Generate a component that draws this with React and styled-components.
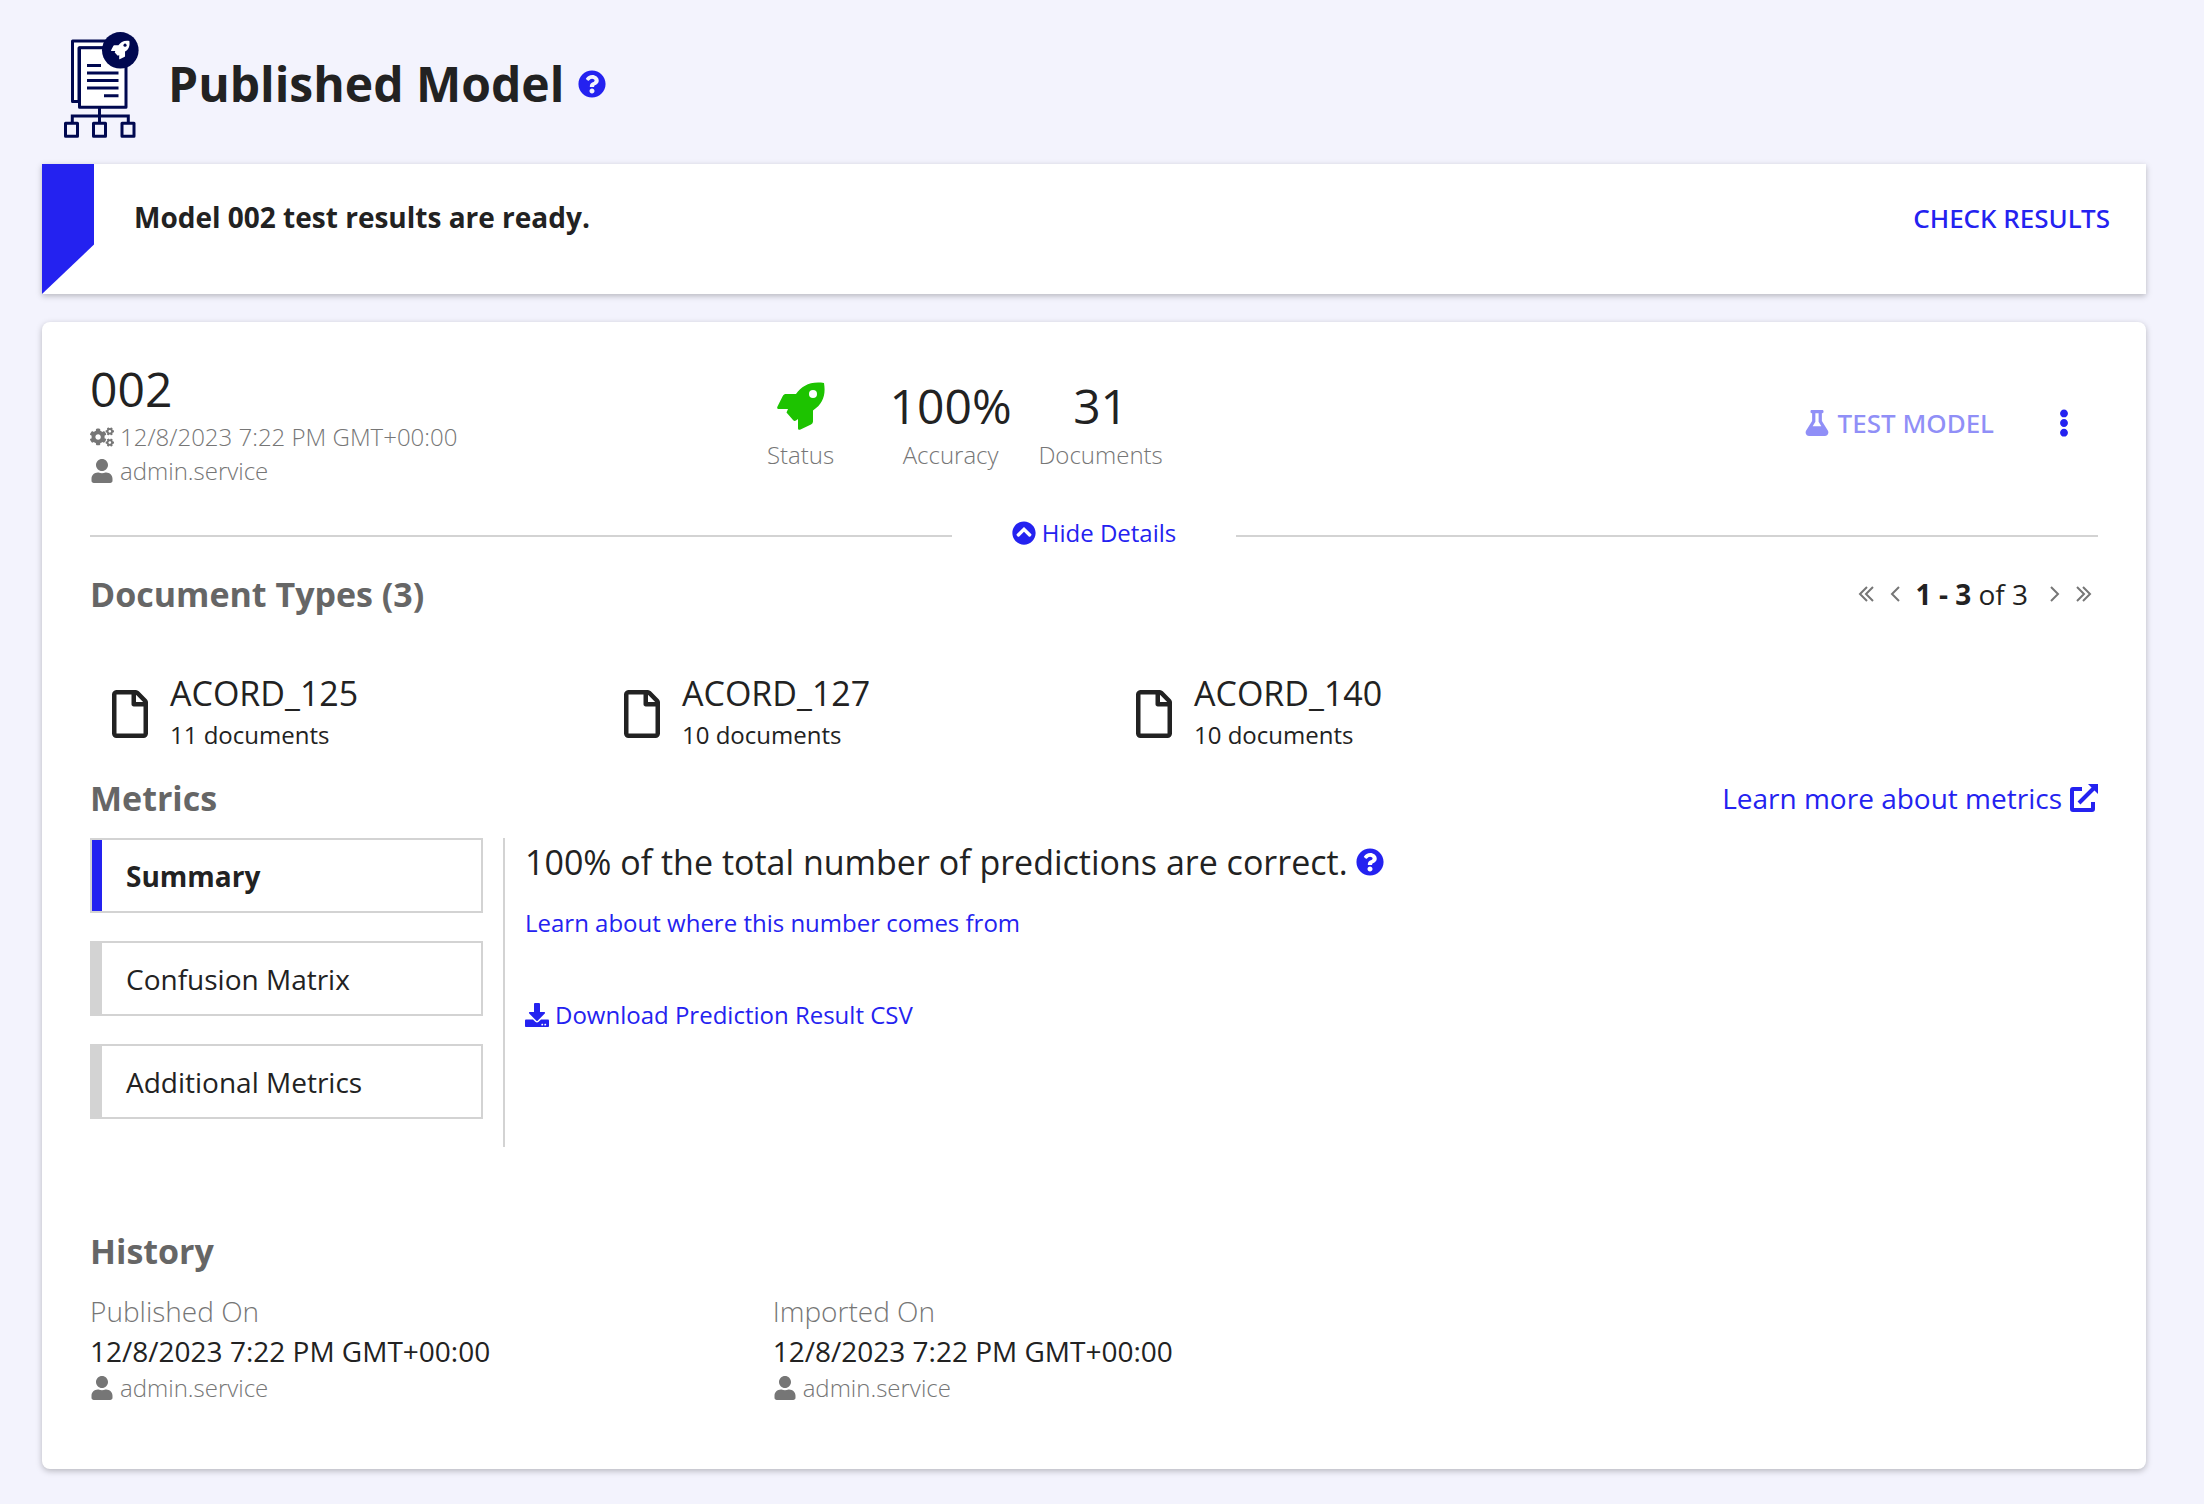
import React, { useState } from "react";
import styled, { createGlobalStyle } from "styled-components";
import {
  FaChevronCircleUp,
  FaCogs,
  FaDownload,
  FaEllipsisV,
  FaFlask,
  FaQuestionCircle,
  FaUser,
} from "react-icons/fa";

const GlobalStyle = createGlobalStyle`
  * {
    box-sizing: border-box;
  }
  body {
    margin: 0;
    background: #f3f3fd;
    color: #222;
    font-family: "Open Sans", "Noto Sans", sans-serif;
    font-size: 24px;
    line-height: 34px;
  }
  h1, h2, p, dl, dd, ul {
    margin: 0;
    padding: 0;
  }
  button {
    background: none;
    border: 0;
    padding: 0;
    color: inherit;
    font: inherit;
    cursor: pointer;
  }
  svg {
    display: block;
    flex: none;
  }
`;

const Page = styled.main`
  padding: 28px 58px 36px 42px;
`;

const PageHeader = styled.header`
  display: flex;
  align-items: center;
  height: 112px;
  padding-left: 20px;
  margin-bottom: 24px;
`;

const PageTitle = styled.h1`
  margin-left: 28px;
  font-size: 48px;
  line-height: 64px;
  font-weight: 700;
`;

const HelpButton = styled.button`
  margin-left: ${(props) => props.$gap}px;
  color: #2422f0;
  font-size: 28px;
`;

const Banner = styled.section`
  display: flex;
  background: #fff;
  min-height: 130px;
  box-shadow: 0 2px 6px rgba(0, 0, 0, 0.25);
  margin-bottom: 28px;
`;

const Flag = styled.div`
  width: 52px;
  background: #2422f0;
  clip-path: polygon(0 0, 100% 0, 100% 62%, 0 100%);
`;

const BannerText = styled.p`
  flex: 1;
  padding: 36px 40px;
  font-size: 28px;
  line-height: 34px;
  font-weight: 700;
`;

// Open Sans has no medium cut here, so the actions use Noto Sans
const ActionButton = styled.button`
  display: flex;
  align-items: center;
  gap: 8px;
  color: #2422f0;
  font-family: "Noto Sans", "Open Sans", sans-serif;
  font-size: 26px;
  line-height: 36px;
  font-weight: 500;

  &:disabled {
    opacity: 0.5;
  }
`;

const BannerAction = styled(ActionButton)`
  align-self: flex-start;
  padding: 36px;
`;

const Card = styled.section`
  background: #fff;
  border-radius: 8px;
  box-shadow: 0 2px 6px rgba(0, 0, 0, 0.25);
  padding: 36px 48px 64px;
`;

const Summary = styled.div`
  display: grid;
  grid-template-columns: 27fr 450px 40fr;
  gap: 40px;
`;

const ModelName = styled.p`
  font-size: 48px;
  line-height: 62px;
`;

const Meta = styled.p`
  display: flex;
  align-items: center;
  gap: 6px;
  color: #767676;
  font-weight: 300;
`;

const Stats = styled.dl`
  display: grid;
  grid-template-columns: repeat(3, 1fr);
  padding-top: 16px;
`;

const Stat = styled.div`
  display: flex;
  flex-direction: column-reverse;
  align-items: center;
  justify-content: flex-end;
`;

const StatLabel = styled.dt`
  color: #767676;
  font-weight: 300;
`;

const StatValue = styled.dd`
  display: flex;
  align-items: center;
  height: 64px;
  font-size: 48px;
  line-height: 64px;
`;

const Actions = styled.div`
  display: flex;
  align-items: center;
  justify-content: flex-end;
  height: 130px;
  gap: 56px;
  padding-right: 20px;
`;

const MenuButton = styled.button`
  color: #2422f0;
  font-size: 28px;
`;

const Divider = styled.div`
  display: flex;
  align-items: center;
  margin: 28px 0 14px;

  &::before,
  &::after {
    content: "";
    flex: 1;
    height: 2px;
    background: #d3d3d3;
  }
`;

const Toggle = styled.button`
  display: flex;
  align-items: center;
  gap: 6px;
  padding: 0 60px 6px;
  color: #2422f0;
`;

const SectionHead = styled.div`
  display: flex;
  align-items: center;
  justify-content: space-between;
`;

const SectionTitle = styled.h2`
  color: #666;
  font-size: 34px;
  line-height: 48px;
  font-weight: 700;
`;

const Pager = styled.nav`
  display: flex;
  align-items: center;
  font-size: 28px;
`;

const PageRange = styled.p`
  margin: 0 14px 0 8px;
`;

const PagerButton = styled.button`
  color: #767676;
  padding: 0 8px;

  &:last-child {
    padding-right: 6px;
  }
`;

const DocumentTypes = styled.ul`
  display: grid;
  grid-template-columns: repeat(4, 1fr);
  gap: 40px;
  padding: 54px 0 18px;
  line-height: 42px;
  list-style: none;
`;

const DocumentType = styled.li`
  display: flex;
  align-items: center;
  gap: 22px;
  padding-left: 22px;
`;

const TypeName = styled.p`
  font-size: 34px;
`;

const MetricsLink = styled.a`
  display: flex;
  align-items: center;
  gap: 8px;
  color: #2422f0;
  font-size: 28px;
  text-decoration: none;
`;

const Metrics = styled.div`
  display: flex;
  margin-top: 16px;
`;

const Tabs = styled.div`
  display: flex;
  flex-direction: column;
  gap: 28px;
  width: 415px;
  padding: 0 20px 28px 0;
  border-right: 2px solid #d3d3d3;
`;

const Tab = styled.button`
  display: flex;
  align-items: center;
  height: 75px;
  padding-left: 34px;
  border: 2px solid #d3d3d3;
  box-shadow: inset 10px 0 0 ${(props) => (props.$active ? "#2422f0" : "#d3d3d3")};
  font-size: 28px;
  font-weight: ${(props) => (props.$active ? 700 : 400)};
`;

const TabPanel = styled.div`
  padding-left: 20px;
`;

const Headline = styled.p`
  display: flex;
  align-items: center;
  font-size: 34px;
  line-height: 48px;
`;

const TextLink = styled.a`
  display: flex;
  align-items: center;
  gap: 6px;
  width: fit-content;
  margin-top: ${(props) => props.$space}px;
  color: #2422f0;
  text-decoration: none;
`;

const History = styled.section`
  margin-top: 80px;
`;

const HistoryGrid = styled.div`
  display: grid;
  grid-template-columns: repeat(3, 1fr);
  gap: 40px;
  padding-top: 16px;
`;

const HistoryLabel = styled.p`
  color: #767676;
  font-size: 28px;
  line-height: 40px;
  font-weight: 300;
`;

const HistoryDate = styled.p`
  font-size: 28px;
  line-height: 40px;
`;

const rocketBody =
  "M47 1C33-1 25 4 19 12H9.500C7.500 12 6.500 12.500 5.500 14.500L.5 24.500C-.3 26 .3 27 2 27H11L9.500 30.500 16 38Q17.500 39.500 19 38.500L21 37V46.500Q21 48.500 23.500 47.500L34 42.500Q36 41.500 36 39.500V28.500C46 22 49 13 47 1z";

// stacked pages over an org chart, with a rocket badge in the corner
function ModelLogo() {
  return (
    <svg width="78" height="112" viewBox="0 0 78 112" fill="none" stroke="#000850" strokeWidth="3">
      <path d="M17 73.500h-6.500V13H50v7H17z" fill="#fff" strokeLinejoin="round" />
      <path d="M17.500 19.800H64v59.500H17.500z" fill="#fff" strokeLinejoin="round" />
      <path d="M25 37.500h14M25 45h31.500M25 52.500h31.500M25 60h31.500M42 67.700h14.500" />
      <path d="M37.500 80v15M10.300 95v-7h56v7" />
      <path
        d="M3.500 95.200h12v13h-12zM31.500 95.200h12v13h-12zM60 95.200h12v13H60z"
        strokeLinejoin="round"
      />
      <circle cx="58.300" cy="22.300" r="18.300" fill="#000850" stroke="none" />
      <g transform="translate(49 12.500) scale(.39)" stroke="none">
        <path d={rocketBody} fill="#fff" />
        <circle cx="36" cy="12" r="4" fill="#000850" />
      </g>
    </svg>
  );
}

function Rocket() {
  return (
    <svg width="48" height="48" viewBox="0 0 48 48" fill="#1dc300">
      <path d={rocketBody} />
      <circle cx="36" cy="12" r="4" fill="#fff" />
    </svg>
  );
}

function FileIcon() {
  return (
    <svg width="36" height="48" viewBox="0 0 384 512" fill="#222">
      <path d="M369.900 97.900L286 14C277 5 264.800-.1 252.100-.1H48C21.500 0 0 21.500 0 48v416c0 26.500 21.500 48 48 48h288c26.500 0 48-21.500 48-48V131.900c0-12.700-5.100-25-14.100-34zM332.100 128H256V51.900l76.100 76.100zM48 464V48h160v104c0 13.300 10.700 24 24 24h104v288H48z" />
    </svg>
  );
}

function ExternalIcon() {
  return (
    <svg width="28" height="28" viewBox="0 0 28 28" fill="none" stroke="#2422f0" strokeWidth="4">
      <path d="M12 5H3a1 1 0 0 0-1 1v19a1 1 0 0 0 1 1h19a1 1 0 0 0 1-1v-7" />
      <path d="M9 19L24 4" />
      <path d="M18 0h10v10z" fill="#2422f0" stroke="none" />
    </svg>
  );
}

function Chevron({ double, flip }) {
  return (
    <svg
      width={double ? 16 : 10}
      height="18"
      viewBox={double ? "0 0 16 18" : "0 0 10 18"}
      fill="none"
      stroke="currentColor"
      strokeWidth="2"
    >
      <path d={flip ? "M1 2l7 7-7 7" : "M9 2L2 9l7 7"} />
      {double && <path d={flip ? "M7 2l7 7-7 7" : "M15 2L8 9l7 7"} />}
    </svg>
  );
}

const documentTypes = [
  { name: "ACORD_125", count: 11 },
  { name: "ACORD_127", count: 10 },
  { name: "ACORD_140", count: 10 },
];

const tabs = ["Summary", "Confusion Matrix", "Additional Metrics"];

const history = [
  { label: "Published On", date: "12/8/2023 7:22 PM GMT+00:00", user: "admin.service" },
  { label: "Imported On", date: "12/8/2023 7:22 PM GMT+00:00", user: "admin.service" },
];

function App() {
  const [activeTab, setActiveTab] = useState("Summary");

  return (
    <Page>
      <GlobalStyle />
      <PageHeader>
        <ModelLogo />
        <PageTitle>Published Model</PageTitle>
        <HelpButton $gap={14} aria-label="Help">
          <FaQuestionCircle />
        </HelpButton>
      </PageHeader>

      <Banner>
        <Flag />
        <BannerText>Model 002 test results are ready.</BannerText>
        <BannerAction>CHECK RESULTS</BannerAction>
      </Banner>

      <Card>
        <Summary>
          <div>
            <ModelName>002</ModelName>
            <Meta>
              <FaCogs />
              12/8/2023 7:22 PM GMT+00:00
            </Meta>
            <Meta>
              <FaUser />
              admin.service
            </Meta>
          </div>
          <Stats>
            <Stat>
              <StatLabel>Status</StatLabel>
              <StatValue>
                <Rocket />
              </StatValue>
            </Stat>
            <Stat>
              <StatLabel>Accuracy</StatLabel>
              <StatValue>100%</StatValue>
            </Stat>
            <Stat>
              <StatLabel>Documents</StatLabel>
              <StatValue>31</StatValue>
            </Stat>
          </Stats>
          <Actions>
            <ActionButton disabled>
              <FaFlask />
              TEST MODEL
            </ActionButton>
            <MenuButton aria-label="More actions">
              <FaEllipsisV />
            </MenuButton>
          </Actions>
        </Summary>

        <Divider>
          <Toggle>
            <FaChevronCircleUp />
            Hide Details
          </Toggle>
        </Divider>

        <SectionHead>
          <SectionTitle>Document Types (3)</SectionTitle>
          <Pager>
            <PagerButton aria-label="First page">
              <Chevron double />
            </PagerButton>
            <PagerButton aria-label="Previous page">
              <Chevron />
            </PagerButton>
            <PageRange>
              <b>1 - 3</b> of 3
            </PageRange>
            <PagerButton aria-label="Next page">
              <Chevron flip />
            </PagerButton>
            <PagerButton aria-label="Last page">
              <Chevron double flip />
            </PagerButton>
          </Pager>
        </SectionHead>

        <DocumentTypes>
          {documentTypes.map((type) => (
            <DocumentType key={type.name}>
              <FileIcon />
              <div>
                <TypeName>{type.name}</TypeName>
                <p>{type.count} documents</p>
              </div>
            </DocumentType>
          ))}
        </DocumentTypes>

        <SectionHead>
          <SectionTitle>Metrics</SectionTitle>
          <MetricsLink href="#metrics">
            Learn more about metrics
            <ExternalIcon />
          </MetricsLink>
        </SectionHead>
        <Metrics>
          <Tabs>
            {tabs.map((tab) => (
              <Tab key={tab} $active={tab === activeTab} onClick={() => setActiveTab(tab)}>
                {tab}
              </Tab>
            ))}
          </Tabs>
          <TabPanel>
            <Headline>
              100% of the total number of predictions are correct.
              <HelpButton $gap={8} aria-label="About accuracy">
                <FaQuestionCircle />
              </HelpButton>
            </Headline>
            <TextLink href="#number" $space={20}>
              Learn about where this number comes from
            </TextLink>
            <TextLink href="#csv" $space={58}>
              <FaDownload />
              Download Prediction Result CSV
            </TextLink>
          </TabPanel>
        </Metrics>

        <History>
          <SectionTitle>History</SectionTitle>
          <HistoryGrid>
            {history.map((entry) => (
              <div key={entry.label}>
                <HistoryLabel>{entry.label}</HistoryLabel>
                <HistoryDate>{entry.date}</HistoryDate>
                <Meta>
                  <FaUser />
                  {entry.user}
                </Meta>
              </div>
            ))}
          </HistoryGrid>
        </History>
      </Card>
    </Page>
  );
}

export default App;
